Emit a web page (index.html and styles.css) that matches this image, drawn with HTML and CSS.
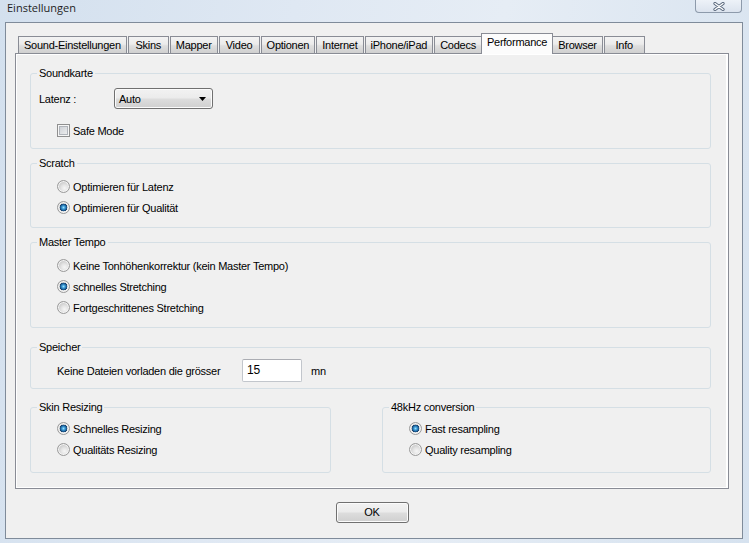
FILE: index.html
```html
<!DOCTYPE html>
<html lang="de">
<head>
    <meta charset="UTF-8">
    <title>Einstellungen</title>
    <link rel="stylesheet" href="styles.css">
</head>
<body>
    <div class="window">
        <div class="titlebar">
            <span class="title">Einstellungen</span>
            <span class="close-btn">
                <svg width="12" height="9" viewBox="0 0 12 9">
                    <path d="M2 1.5 L10 7.5 M10 1.5 L2 7.5" stroke="#56657a" stroke-width="3.2" stroke-linecap="round"/>
                    <path d="M2 1.5 L10 7.5 M10 1.5 L2 7.5" stroke="#ffffff" stroke-width="1.4" stroke-linecap="round"/>
                </svg>
            </span>
        </div>

        <div class="client">
            <div class="tabs">
                <span class="tab">Sound-Einstellungen</span>
                <span class="tab">Skins</span>
                <span class="tab">Mapper</span>
                <span class="tab">Video</span>
                <span class="tab">Optionen</span>
                <span class="tab">Internet</span>
                <span class="tab">iPhone/iPad</span>
                <span class="tab">Codecs</span>
                <span class="tab active">Performance</span>
                <span class="tab">Browser</span>
                <span class="tab">Info</span>
            </div>

            <div class="page">
                <fieldset class="group g-sound">
                    <legend>Soundkarte</legend>
                    <div class="row">
                        <span class="field-label">Latenz :</span>
                        <span class="combo">
                            <span>Auto</span>
                            <svg width="7" height="4" viewBox="0 0 7 4"><path d="M0 0 H7 L3.5 4 Z" fill="#000"/></svg>
                        </span>
                    </div>
                    <div class="row indent">
                        <span class="check"></span>
                        <span>Safe Mode</span>
                    </div>
                </fieldset>

                <fieldset class="group g-list">
                    <legend>Scratch</legend>
                    <div class="row indent"><span class="radio"></span><span>Optimieren für Latenz</span></div>
                    <div class="row indent"><span class="radio on"></span><span>Optimieren für Qualität</span></div>
                </fieldset>

                <fieldset class="group g-list">
                    <legend>Master Tempo</legend>
                    <div class="row indent"><span class="radio"></span><span>Keine Tonhöhenkorrektur (kein Master Tempo)</span></div>
                    <div class="row indent"><span class="radio on"></span><span>schnelles Stretching</span></div>
                    <div class="row indent"><span class="radio"></span><span>Fortgeschrittenes Stretching</span></div>
                </fieldset>

                <fieldset class="group g-memory">
                    <legend>Speicher</legend>
                    <div class="row indent">
                        <span class="memory-label">Keine Dateien vorladen die grösser</span>
                        <span class="textbox">15</span>
                        <span class="unit">mn</span>
                    </div>
                </fieldset>

                <div class="pair">
                    <fieldset class="group g-list g-skin">
                        <legend>Skin Resizing</legend>
                        <div class="row indent"><span class="radio on"></span><span>Schnelles Resizing</span></div>
                        <div class="row indent"><span class="radio"></span><span>Qualitäts Resizing</span></div>
                    </fieldset>
                    <fieldset class="group g-list g-conv">
                        <legend>48kHz conversion</legend>
                        <div class="row indent"><span class="radio on"></span><span>Fast resampling</span></div>
                        <div class="row indent"><span class="radio"></span><span>Quality resampling</span></div>
                    </fieldset>
                </div>
            </div>

            <div class="footer">
                <span class="button">OK</span>
            </div>
        </div>
    </div>
</body>
</html>
```

FILE: styles.css
```css
body {
    margin: 0;
    font-family: "Liberation Sans", Arial, sans-serif;
    font-size: 11px;
    letter-spacing: -0.25px;
    color: #000;
    background: #c9d8e9;
}
.window {
    width: 749px;
    height: 543px;
    display: flex;
    flex-direction: column;
    background: linear-gradient(100deg, #d3e0ee 0%, #dfe8f3 35%, #e6edf5 60%, #d6e2ef 100%);
}

/* title bar */
.titlebar {
    height: 22px;
    display: flex;
    justify-content: space-between;
    align-items: flex-start;
}
.title {
    font-family: "Open Sans", "Liberation Sans", sans-serif;
    font-size: 11px;
    letter-spacing: 0;
    line-height: 16px;
    padding-left: 7px;
    color: #1e1e1e;
}
.close-btn {
    width: 45px;
    height: 12px;
    margin-right: 7px;
    border: 1px solid #8d9aab;
    border-top: none;
    border-radius: 0 0 4px 4px;
    background: linear-gradient(#edf2f8, #dbe3ee);
    display: flex;
    align-items: center;
    justify-content: center;
}

/* client area */
.client {
    flex: 1;
    margin: 0 6px 4px 5px;
    border: 1px solid #7f8b9a;
    background: #f0f0f0;
    padding: 10px 13px 0 9px;
    display: flex;
    flex-direction: column;
}

/* tab strip */
.tabs {
    display: flex;
    align-items: flex-end;
    height: 20px;
    padding-left: 3px;
}
.tab {
    height: 17px;
    min-width: 41px;
    line-height: 16px;
    padding: 0 5px;
    margin-right: 1px;
    border: 1px solid #898c95;
    border-bottom: none;
    box-sizing: border-box;
    background: linear-gradient(#f3f3f3, #ebebeb 45%, #dedede 55%, #d0d0d0);
    text-align: center;
    white-space: nowrap;
}
.tab.active {
    height: 21px;
    margin: 0 -1px -1px -2px;
    padding: 0 5px;
    line-height: 17px;
    background: #fcfcfc;
    position: relative;
}

/* tab page */
.page {
    height: 436px;
    box-sizing: border-box;
    border: 1px solid #898c95;
    box-shadow: inset 1px 1px 0 #fff, inset -2px -1px 0 #fff;
    padding: 13px 17px 0 14px;
}

/* group boxes */
.group {
    margin: 0 0 8px;
    padding: 0;
    border: 1px solid #d5dfe5;
    border-radius: 3px;
    min-width: 0;
}
.group legend {
    margin-left: 6px;
    padding: 0 2px;
    line-height: 13px;
}
.row {
    height: 21px;
    display: flex;
    align-items: center;
    white-space: nowrap;
}
.indent {
    padding-left: 26px;
}

.g-sound {
    padding: 8px 0 7px;
}
.g-sound .row:first-of-type {
    padding-left: 8px;
}
.g-sound .row + .row {
    margin-top: 11px;
}
.g-list {
    padding: 6px 0 9px;
}
.g-memory {
    margin-top: 13px;
    margin-bottom: 12px;
    padding: 5px 0 6px;
}
.g-memory .row {
    height: 23px;
}
.pair {
    display: flex;
    gap: 51px;
}
.pair .group {
    margin: 0;
    padding: 4px 0 12px;
}
.g-skin {
    width: 301px;
    box-sizing: border-box;
}
.g-conv {
    flex: 1;
}

/* controls */
.field-label {
    width: 75px;
}
.combo {
    width: 99px;
    height: 21px;
    box-sizing: border-box;
    border: 1px solid #707070;
    border-radius: 3px;
    background: linear-gradient(#f2f2f2, #ebebeb 48%, #dddddd 52%, #cfcfcf);
    box-shadow: inset 0 0 0 1px #fbfbfb;
    display: flex;
    align-items: center;
    justify-content: space-between;
    padding: 0 6px 0 4px;
}
.check {
    width: 13px;
    height: 13px;
    box-sizing: border-box;
    border: 1px solid #8f8f8f;
    background: linear-gradient(135deg, #c6cad0, #f4f4f4);
    box-shadow: inset 0 0 0 1px #f6f6f6, inset 0 0 0 2px #b0b4ba;
    margin-right: 3px;
}
.radio {
    width: 13px;
    height: 13px;
    box-sizing: border-box;
    border-radius: 50%;
    border: 1px solid #9a9a9a;
    background: radial-gradient(circle at 60% 65%, #f6f6f6 0, #e6e6e6 3px, #cfcfcf 6px);
    box-shadow: inset 0 0 0 1px #f4f4f4;
    margin-right: 3px;
}
.radio.on {
    background:
        radial-gradient(circle at 50% 50%, #9ee0fb 0, #3a9ad6 1.6px, #1c5d94 3px, #163f6b 3.6px, transparent 4.1px),
        radial-gradient(circle at 60% 65%, #f6f6f6 0, #e6e6e6 3px, #cfcfcf 6px);
}
.memory-label {
    width: 185px;
}
.textbox {
    width: 60px;
    height: 23px;
    box-sizing: border-box;
    border: 1px solid #c2c6cc;
    border-top-color: #abadb3;
    border-radius: 2px;
    background: #fff;
    padding: 0 4px;
    font-size: 12px;
    line-height: 21px;
}
.unit {
    margin-left: 9px;
}

/* dialog buttons */
.footer {
    flex: 1;
    display: flex;
    justify-content: center;
    align-items: flex-start;
    padding: 13px 0 0 0;
}
.button {
    width: 73px;
    height: 21px;
    box-sizing: border-box;
    border: 1px solid #707070;
    border-radius: 3px;
    background: linear-gradient(#f2f2f2, #ebebeb 48%, #dddddd 52%, #cfcfcf);
    box-shadow: inset 0 0 0 1px #fbfbfb;
    text-align: center;
    line-height: 19px;
}
```
